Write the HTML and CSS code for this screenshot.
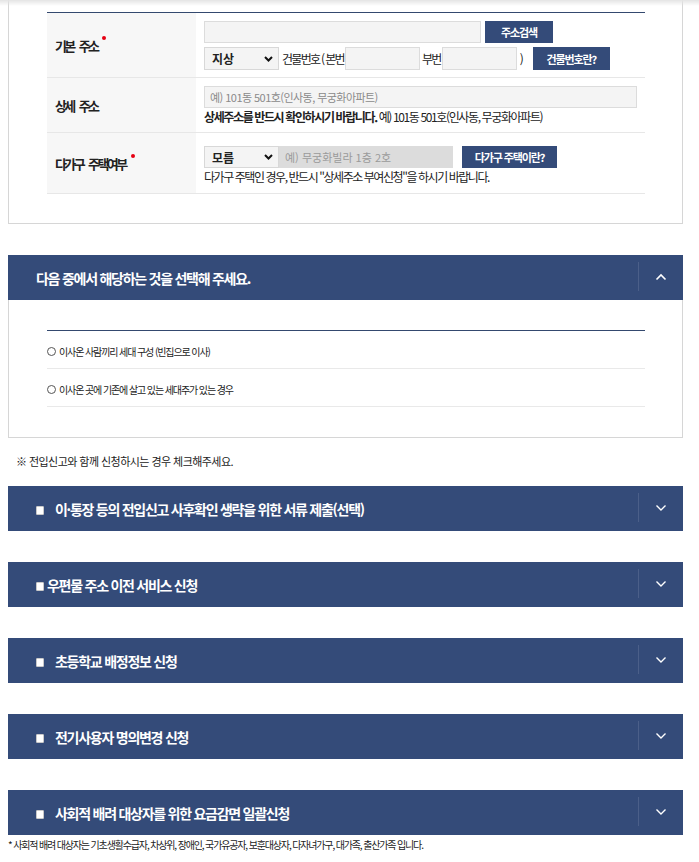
FILE: index.html
```html
<!DOCTYPE html>
<html lang="ko">
<head>
  <meta charset="UTF-8">
  <meta name="viewport" content="width=device-width, initial-scale=1.0">
  <title>전입신고 - 주소 입력</title>
  <link rel="stylesheet" href="styles.css">
</head>
<body>
  <div class="panel">
    <div class="form-table">
      <div class="form-row row-base">
        <div class="label">기본 주소<span class="req"></span></div>
        <div class="cell">
          <div class="line">
            <input class="field field-addr" type="text">
            <button class="btn btn-search" type="button">주소검색</button>
          </div>
          <div class="line">
            <span class="select-wrap">
              <select class="select"><option>지상</option><option>지하</option></select>
              <svg class="select-arrow" width="9" height="6" viewBox="0 0 9 6"><path d="M1 1l3.5 3.5L8 1" fill="none" stroke="#111" stroke-width="2"/></svg>
            </span>
            <span class="txt txt-bno">건물번호 ( 본번</span>
            <input class="field field-no" type="text">
            <span class="txt txt-sub">부번</span>
            <input class="field field-no" type="text">
            <span class="txt txt-close">)</span>
            <button class="btn btn-bno" type="button">건물번호란?</button>
          </div>
        </div>
      </div>

      <div class="form-row row-detail">
        <div class="label">상세 주소</div>
        <div class="cell">
          <input class="field field-detail" type="text" placeholder="예) 101동 501호(인사동, 무궁화아파트)">
          <p class="help"><strong>상세주소를 반드시 확인하시기 바랍니다.</strong> 예) 101동 501호(인사동, 무궁화아파트)</p>
        </div>
      </div>

      <div class="form-row row-multi">
        <div class="label">다가구 주택여부<span class="req"></span></div>
        <div class="cell">
          <div class="line">
            <span class="select-wrap">
              <select class="select"><option>모름</option><option>예</option><option>아니오</option></select>
              <svg class="select-arrow" width="9" height="6" viewBox="0 0 9 6"><path d="M1 1l3.5 3.5L8 1" fill="none" stroke="#111" stroke-width="2"/></svg>
            </span>
            <input class="field field-floor" type="text" placeholder="예) 무궁화빌라 1층 2호" disabled>
            <button class="btn btn-multi" type="button">다가구 주택이란?</button>
          </div>
          <p class="help help-multi">다가구 주택인 경우, 반드시 "상세주소 부여신청"을 하시기 바랍니다.</p>
        </div>
      </div>
    </div>
  </div>

  <div class="acc-head open">
    <span class="acc-title">다음 중에서 해당하는 것을 선택해 주세요.</span>
    <span class="acc-toggle">
      <svg width="12" height="8" viewBox="0 0 12 8"><path d="M1.5 6.5L6 2l4.5 4.5" fill="none" stroke="#fff" stroke-width="1.6"/></svg>
    </span>
  </div>
  <div class="panel panel-choice">
    <ul class="choice-list">
      <li><span class="radio"></span>이사온 사람끼리 세대 구성 (빈집으로 이사)</li>
      <li><span class="radio"></span>이사온 곳에 기존에 살고 있는 세대주가 있는 경우</li>
    </ul>
  </div>

  <p class="note">※ 전입신고와 함께 신청하시는 경우 체크해주세요.</p>

  <div class="acc-head">
    <span class="check"></span><span class="acc-title gap">이·통장 등의 전입신고 사후확인 생략을 위한 서류 제출(선택)</span>
    <span class="acc-toggle"><svg width="12" height="8" viewBox="0 0 12 8"><path d="M1.5 1.5L6 6l4.5-4.5" fill="none" stroke="#fff" stroke-width="1.4"/></svg></span>
  </div>
  <div class="acc-head">
    <span class="check"></span><span class="acc-title tight">우편물 주소 이전 서비스 신청</span>
    <span class="acc-toggle"><svg width="12" height="8" viewBox="0 0 12 8"><path d="M1.5 1.5L6 6l4.5-4.5" fill="none" stroke="#fff" stroke-width="1.4"/></svg></span>
  </div>
  <div class="acc-head">
    <span class="check"></span><span class="acc-title gap">초등학교 배정정보 신청</span>
    <span class="acc-toggle"><svg width="12" height="8" viewBox="0 0 12 8"><path d="M1.5 1.5L6 6l4.5-4.5" fill="none" stroke="#fff" stroke-width="1.4"/></svg></span>
  </div>
  <div class="acc-head">
    <span class="check"></span><span class="acc-title gap">전기사용자 명의변경 신청</span>
    <span class="acc-toggle"><svg width="12" height="8" viewBox="0 0 12 8"><path d="M1.5 1.5L6 6l4.5-4.5" fill="none" stroke="#fff" stroke-width="1.4"/></svg></span>
  </div>
  <div class="acc-head">
    <span class="check"></span><span class="acc-title gap">사회적 배려 대상자를 위한 요금감면 일괄신청</span>
    <span class="acc-toggle"><svg width="12" height="8" viewBox="0 0 12 8"><path d="M1.5 1.5L6 6l4.5-4.5" fill="none" stroke="#fff" stroke-width="1.4"/></svg></span>
  </div>
  <p class="footnote">* 사회적 배려 대상자는 기초생활수급자, 차상위, 장애인, 국가유공자, 보훈대상자, 다자녀가구, 대가족, 출산가족 입니다.</p>
</body>
</html>
```

FILE: styles.css
```css
body {
  margin: 0;
  padding: 0;
  background: #fff;
  color: #222;
  font-family: "Noto Sans CJK KR", "Noto Sans", sans-serif;
  font-size: 12px;
  letter-spacing: -0.08em;
}

/* 상단 고정 헤더 그림자 */
body::before {
  content: "";
  position: fixed;
  top: 0;
  left: 0;
  right: 0;
  height: 6px;
  background: linear-gradient(#e4e4e4, rgba(255, 255, 255, 0));
}

.panel {
  width: 598px;
  margin-left: 8px;
  border: 1px solid #d6d6d6;
  border-top: 0;
  padding: 12px 37px 29px 38px;
}

.form-table {
  border-top: 1px solid #34496f;
}

.form-row {
  display: flex;
  border-bottom: 1px solid #e7e7e7;
}

.label {
  width: 149px;
  flex: none;
  background: #f7f7f7;
  display: flex;
  align-items: center;
  padding-left: 8px;
  box-sizing: border-box;
  font-size: 13px;
  font-weight: bold;
  letter-spacing: -0.2em;
  word-spacing: 4px;
  white-space: pre;
  color: #222;
}

.req {
  display: inline-block;
  width: 4px;
  height: 4px;
  border-radius: 50%;
  background: #e60012;
  margin: 0 0 14px 5px;
}

.cell {
  flex: 1;
  padding: 8px 0 7px 8px;
}

.row-multi .cell {
  padding: 13px 0 8px 8px;
}

.line {
  display: flex;
  align-items: center;
}

.line + .line {
  margin-top: 4px;
}

.field {
  height: 22px;
  box-sizing: border-box;
  border: 1px solid #dcdcdc;
  background: #f4f4f4;
  font-family: inherit;
  font-size: 11px;
  padding: 0 5px;
  margin: 0;
  outline: none;
}

.field::placeholder {
  color: #8a8a8a;
  letter-spacing: -0.05em;
}

.field-addr {
  width: 277px;
}

.field-no {
  width: 75px;
  height: 23px;
}

.field-detail {
  display: block;
  width: 433px;
}

.field-floor {
  width: 174px;
  background: #dcdcdc;
  border-color: #dcdcdc;
}

.field-floor::placeholder {
  color: #9a9a9a;
  letter-spacing: 0;
}

.select-wrap {
  position: relative;
  display: inline-block;
}

.select {
  appearance: none;
  -webkit-appearance: none;
  width: 75px;
  height: 23px;
  box-sizing: border-box;
  border: 1px solid #d8d8d8;
  background: #f4f4f4;
  font-family: inherit;
  font-size: 12px;
  font-weight: bold;
  color: #222;
  padding: 0 0 0 7px;
  margin: 0;
  border-radius: 0;
}

.row-multi .select {
  height: 22px;
}

.select-arrow {
  position: absolute;
  right: 6px;
  top: 9px;
  pointer-events: none;
}

.row-multi .select-arrow {
  top: 8px;
}

.txt {
  font-size: 12px;
  color: #222;
}

.txt-bno {
  margin: 0 1px 0 3px;
  letter-spacing: -0.14em;
}

.txt-sub {
  margin: 0 1px 0 2px;
  letter-spacing: -0.14em;
}

.txt-close {
  margin: 0 10px 0 3px;
}

.btn {
  border: 0;
  background: #344b79;
  color: #fff;
  font-family: inherit;
  font-size: 11px;
  font-weight: bold;
  letter-spacing: -0.1em;
  height: 22px;
  padding: 0;
  margin: 0;
  cursor: pointer;
}

.btn-search {
  width: 68px;
  margin-left: 4px;
}

.btn-bno {
  width: 77px;
  height: 23px;
}

.btn-multi {
  width: 95px;
  margin-left: 9px;
}

.help {
  margin: 1px 0 0;
  line-height: 16px;
  font-size: 12px;
  letter-spacing: -0.115em;
}

.help-multi {
  letter-spacing: -0.12em;
}

.help strong {
  font-weight: bold;
}

.acc-head {
  width: 675px;
  height: 45px;
  margin-left: 8px;
  background: #344b79;
  color: #fff;
  display: flex;
  align-items: center;
  box-sizing: border-box;
  padding-left: 28px;
  margin-bottom: 31px;
}

.acc-head.open {
  margin-top: 31px;
  margin-bottom: 0;
}

.acc-title {
  flex: 1;
  font-size: 14px;
  font-weight: bold;
  letter-spacing: -0.09em;
}

.acc-title.gap {
  margin-left: 11px;
}

.acc-title.tight {
  margin-left: 3px;
}

.check {
  width: 8px;
  height: 9px;
  background: #fff;
  border: 1px solid #c9c9c9;
  border-radius: 1px;
  box-sizing: border-box;
  margin-top: 3px;
}

.acc-toggle {
  width: 45px;
  height: 29px;
  border-left: 1px solid #4b5f89;
  display: flex;
  align-items: center;
  justify-content: center;
  box-sizing: border-box;
  margin-top: -2px;
}

.panel-choice {
  padding-top: 30px;
  padding-bottom: 30px;
}

.choice-list {
  list-style: none;
  margin: 0;
  padding: 0;
  border-top: 1px solid #34496f;
}

.choice-list li {
  height: 38px;
  border-bottom: 1px solid #e9e9e9;
  display: flex;
  align-items: center;
  font-size: 10px;
  letter-spacing: -0.11em;
  color: #222;
  padding-top: 3px;
  box-sizing: border-box;
}

.radio {
  width: 7px;
  height: 7px;
  border: 1px solid #555;
  border-radius: 50%;
  margin-right: 3px;
}

.note {
  margin: 13px 0 15px 16px;
  font-size: 11px;
  letter-spacing: -0.05em;
  line-height: 20px;
  color: #222;
}

.footnote {
  margin: -28px 0 0 8px;
  font-size: 10px;
  letter-spacing: -0.115em;
  line-height: 14px;
  color: #222;
}
```
